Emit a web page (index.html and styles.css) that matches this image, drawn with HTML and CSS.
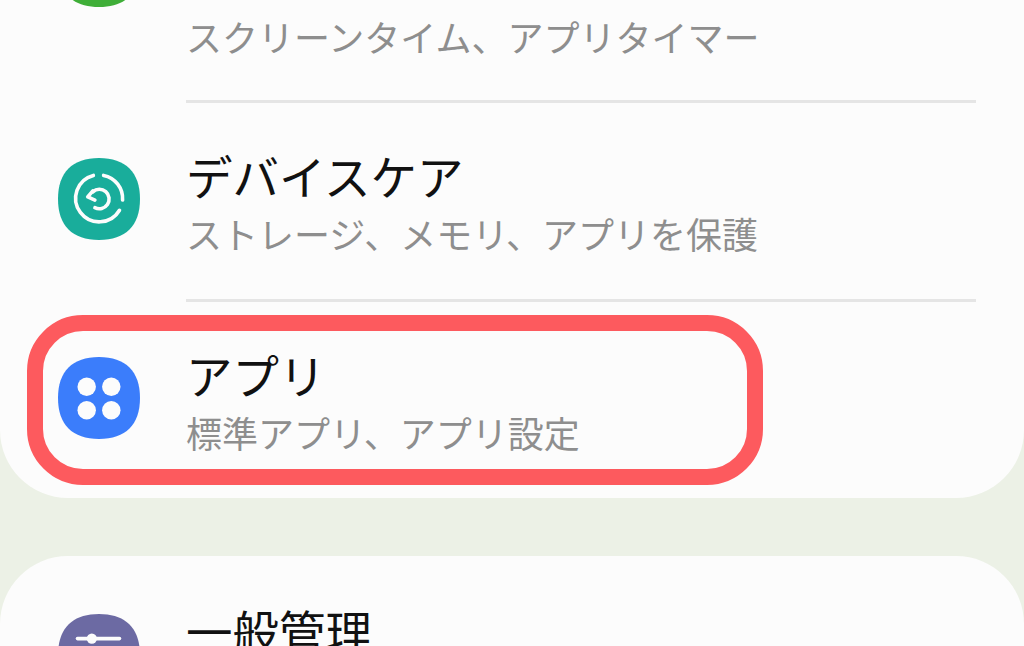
FILE: index.html
```html
<!DOCTYPE html>
<html lang="ja">
<head>
    <meta charset="UTF-8">
    <title>設定</title>
    <link rel="stylesheet" href="styles.css">
</head>
<body>
    <div class="list">
        <section class="card">
            <div class="row first">
                <svg class="icon" viewBox="0 0 80 80"><path class="green" d="M40 0C66 0 80 14 80 40C80 66 66 80 40 80C14 80 0 66 0 40C0 14 14 0 40 0Z"/></svg>
                <div class="text">
                    <div class="sub">スクリーンタイム、アプリタイマー</div>
                </div>
            </div>
            <div class="row">
                <svg class="icon" viewBox="0 0 80 80">
                    <path class="teal" d="M40 0C66 0 80 14 80 40C80 66 66 80 40 80C14 80 0 66 0 40C0 14 14 0 40 0Z"/>
                    <path class="line" d="M44.5 17A23 23 0 0 1 63 41M60 51A23 23 0 1 1 34.5 17"/>
                    <path class="line" d="M34 33A9.5 9.5 0 1 1 36 48.500"/>
                    <path class="line" d="M34 32L29 38L36 41"/>
                </svg>
                <div class="text">
                    <div class="title">デバイスケア</div>
                    <div class="sub">ストレージ、メモリ、アプリを保護</div>
                </div>
            </div>
            <div class="row marked">
                <svg class="icon" viewBox="0 0 80 80">
                    <path class="blue" d="M40 0C66 0 80 14 80 40C80 66 66 80 40 80C14 80 0 66 0 40C0 14 14 0 40 0Z"/>
                    <circle class="dot" cx="28" cy="29" r="9"/>
                    <circle class="dot" cx="52" cy="29" r="9"/>
                    <circle class="dot" cx="28" cy="52" r="9"/>
                    <circle class="dot" cx="52" cy="52" r="9"/>
                </svg>
                <div class="text">
                    <div class="title">アプリ</div>
                    <div class="sub">標準アプリ、アプリ設定</div>
                </div>
                <div class="ring"></div>
            </div>
        </section>
        <section class="card">
            <div class="row">
                <svg class="icon" viewBox="0 0 80 80">
                    <path class="purple" d="M40 0C66 0 80 14 80 40C80 66 66 80 40 80C14 80 0 66 0 40C0 14 14 0 40 0Z"/>
                    <path class="line" d="M19 24H60"/>
                    <circle class="dot" cx="33" cy="24" r="5"/>
                </svg>
                <div class="text">
                    <div class="title">一般管理</div>
                </div>
            </div>
        </section>
    </div>
</body>
</html>
```

FILE: styles.css
```css
html, body {
    height: 100%;
}
body {
    margin: 0;
    overflow: hidden;
    background-color: #ecf1e6;
    font-family: "Noto Sans CJK JP", "Liberation Sans", sans-serif;
}
.list {
    margin-top: -97px;
}
.card {
    background: #fcfcfc;
    border-radius: 68px;
    margin-bottom: 58px;
}
.row {
    position: relative;
    display: flex;
    align-items: flex-start;
    gap: 46px;
    height: 199px;
    box-sizing: border-box;
    padding: 56px 48px 0 58px;
}
.row.marked {
    height: 197px;
}
.card + .card .row {
    padding-top: 57px;
}
.card + .card .icon {
    margin-top: 1px;
}
.first .icon {
    margin-top: -34px;
}
.first .sub {
    margin-top: 68px;
}
.text {
    flex: 1;
    position: relative;
    margin-top: -16px;
}
.row + .row .text::before {
    content: "";
    position: absolute;
    left: 0;
    right: 0;
    top: -42px;
    height: 3px;
    background: #e5e5e5;
}
.icon {
    width: 82px;
    height: 82px;
    flex: none;
}
.title {
    font-size: 46.5px;
    line-height: 66px;
    color: #111;
}
.sub {
    font-size: 36px;
    line-height: 50px;
    color: #8e8e8e;
}
.ring {
    position: absolute;
    left: 27px;
    top: 14px;
    width: 736px;
    height: 170px;
    box-sizing: border-box;
    border: 16px solid #fd5a5e;
    border-radius: 56px;
}
.green { fill: #3fae38; }
.teal { fill: #19ad9b; }
.blue { fill: #3b7dfb; }
.purple { fill: #6c6aa3; }
.dot { fill: #fcfcfc; }
.line {
    fill: none;
    stroke: #fcfcfc;
    stroke-width: 3.5;
    stroke-linecap: round;
    stroke-linejoin: round;
}
```
